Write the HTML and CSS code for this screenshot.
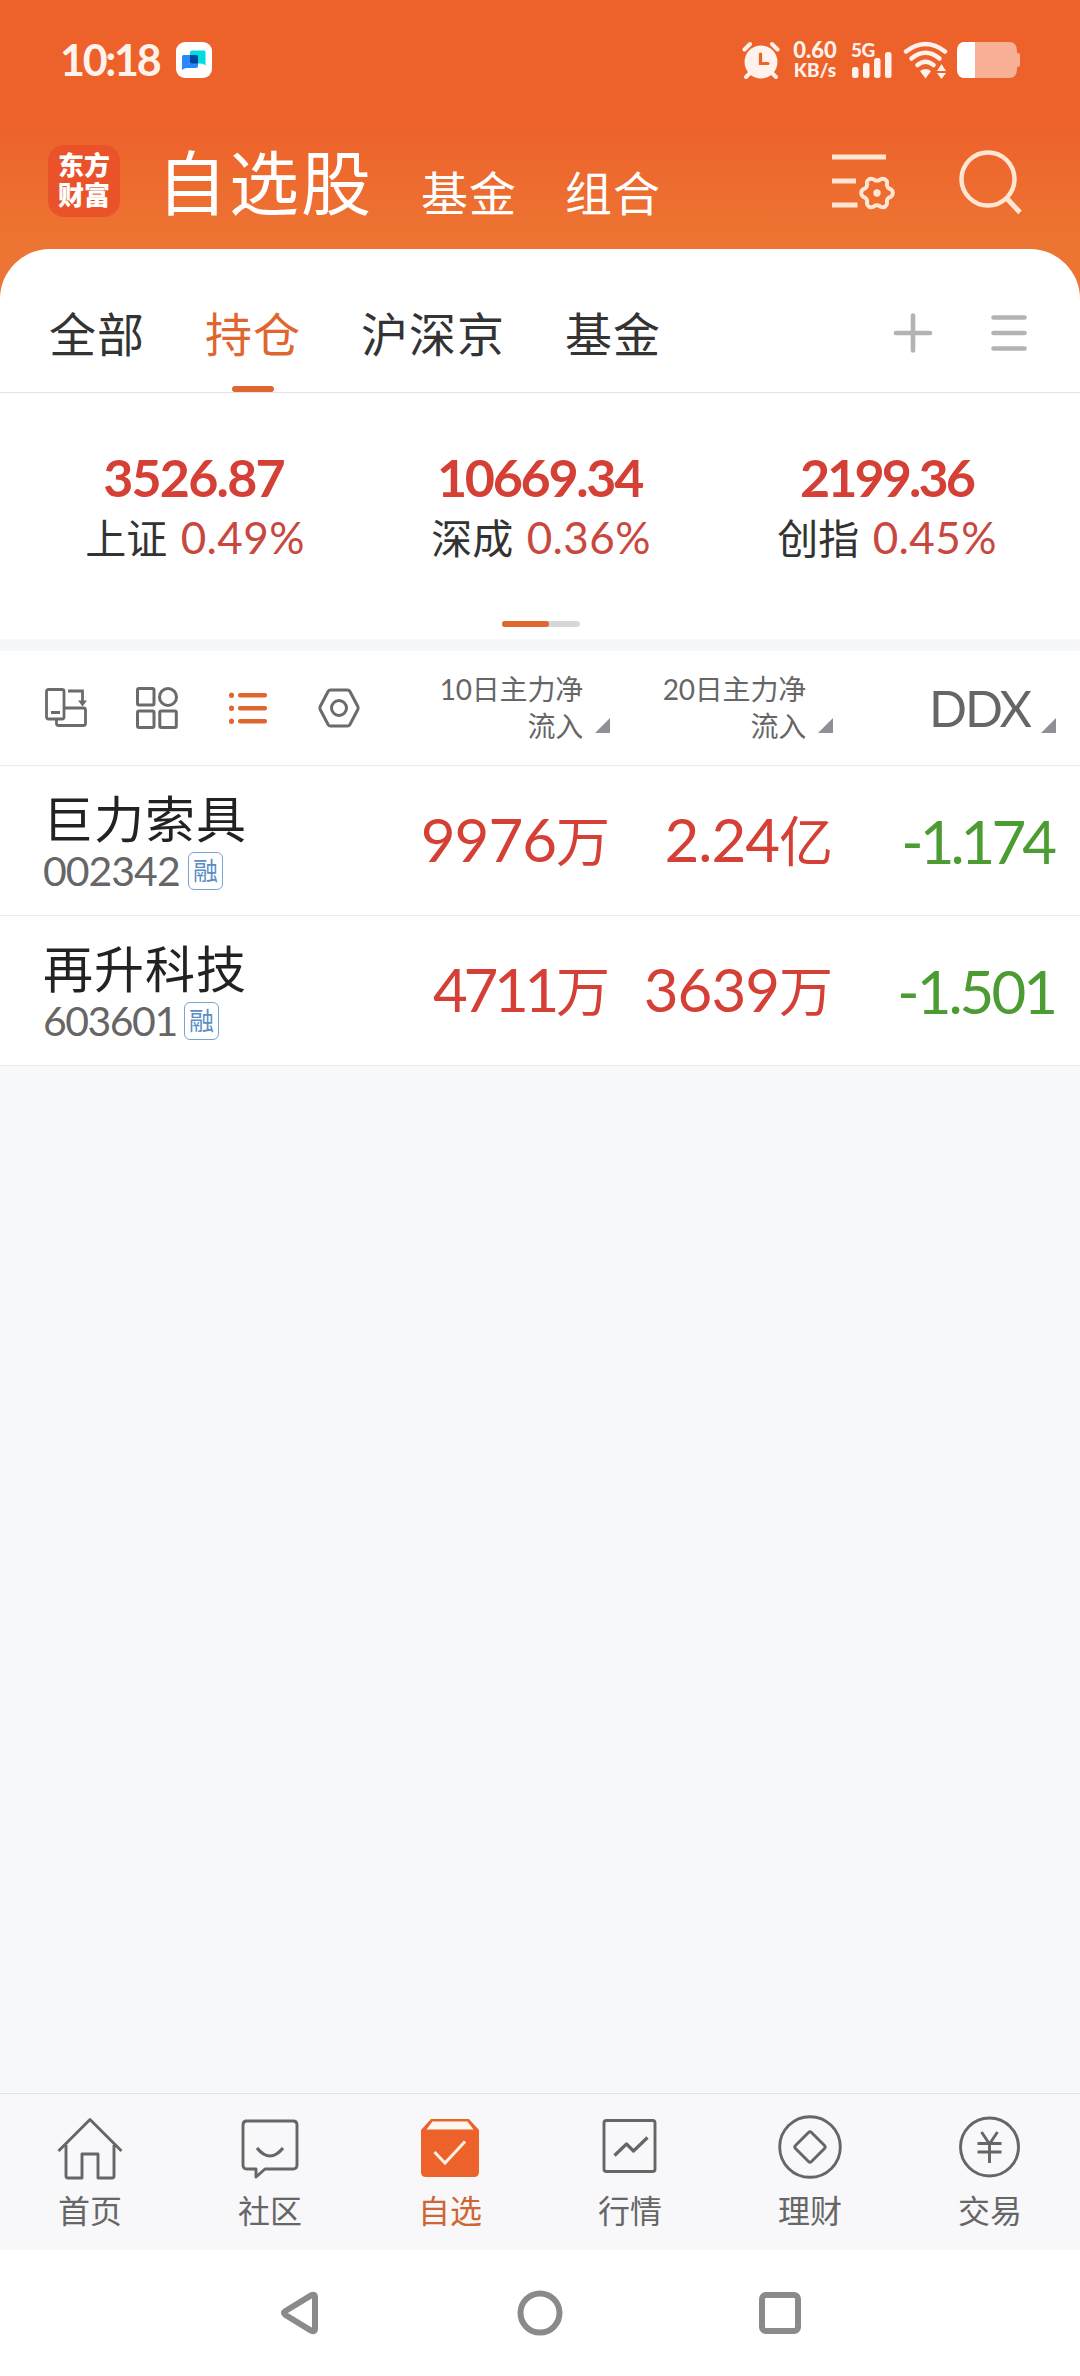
FILE: index.html
```html
<!DOCTYPE html>
<html lang="zh-CN">
<head>
<meta charset="utf-8">
<title>自选股</title>
<link rel="stylesheet" href="styles.css">
</head>
<body>
<div class="app">
  <header class="top">
    <div class="status">
      <span class="clock">10:18</span>
      <svg class="notice" width="36" height="36" viewBox="0 0 36 36"><rect width="36" height="36" rx="9" fill="#fff"/><path d="M16 8.500h12a1.500 1.500 0 0 1 1.500 1.500v13.500q-2-2-5-2H14V10.500a2 2 0 0 1 2-2z" fill="#00dce0"/><path d="M7.500 13H20a2 2 0 0 1 2 2v9a2 2 0 0 1-2 2h-9q-3 0-5 2V14.500A1.500 1.500 0 0 1 7.500 13z" fill="#2a88ff"/><path d="M14 13h6a2 2 0 0 1 2 2v6.500h-6a2 2 0 0 1-2-2z" fill="#00449c"/></svg>
      <div class="status-right">
        <svg class="alarm" width="38" height="38" viewBox="0 0 38 38"><circle cx="19" cy="21" r="16.500" fill="#fff1eb"/><path d="M2.500 8.500 8 3M35.500 8.500 30 3" stroke="#fff1eb" stroke-width="4" stroke-linecap="round"/><path d="M4 36l4-4M34 36l-4-4" stroke="#fff1eb" stroke-width="4" stroke-linecap="round"/><path d="M18.500 13v9.500H26" fill="none" stroke="#ed622b" stroke-width="3.200" stroke-linecap="round"/></svg>
        <div class="speed"><span class="rate">0.60</span><span class="unit">KB/s</span></div>
        <div class="signal"><span class="gen">5G</span>
          <svg width="42" height="26" viewBox="0 0 42 26" fill="#fff1eb"><rect x="1" y="15" width="6.500" height="11" rx="2.500"/><rect x="12" y="11" width="6.500" height="15" rx="2.500"/><rect x="23" y="6" width="6.500" height="20" rx="2.500"/><rect x="34" y="0" width="6.500" height="26" rx="2.500"/></svg>
        </div>
        <svg class="wifi" width="46" height="38" viewBox="0 0 46 38"><g fill="none" stroke="#fff1eb" stroke-width="4.500" stroke-linecap="round"><path d="M3 10.500Q22.500-4.500 42 10.500"/><path d="M8.500 17.500Q22.500 6 36.500 17.500"/><path d="M14.500 24Q22.500 17.500 30.500 24"/></g><path d="M17 30q5.500-4 11 0l-5.500 7.500zM34 30l4.500-7 4.500 7zM34 32h9l-4.500 6z" fill="#fff1eb"/></svg>
        <svg class="battery" width="64" height="36" viewBox="0 0 64 36"><path d="M8 0h44q8 0 8 9v2h1q2 0 2 2v10q0 2-2 2h-1v2q0 9-8 9H8q-8 0-8-9V9Q0 0 8 0z" fill="#f7b095"/><path d="M18 0H8Q0 0 0 9v18q0 9 8 9h10z" fill="#fff"/></svg>
      </div>
    </div>
    <div class="title-bar">
      <div class="logo">东方<br>财富</div>
      <h1 class="title">自选股</h1>
      <span class="section fund">基金</span>
      <span class="section">组合</span>
      <div class="title-actions">
        <svg width="64" height="64" viewBox="0 0 64 64" fill="none" stroke="#ffe6d3" stroke-width="5"><path d="M0 8h54M0 32h24M0 56h25.500"/><path stroke-width="4" stroke-linejoin="round" d="M58.800 40.300A4.400 4.400 0 0 1 58.800 47.700A5 5 0 0 0 55.100 54.100A4.400 4.400 0 0 1 48.700 57.800A5 5 0 0 0 41.300 57.800A4.400 4.400 0 0 1 34.900 54.100A5 5 0 0 0 31.200 47.700A4.400 4.400 0 0 1 31.200 40.300A5 5 0 0 0 34.900 33.900A4.400 4.400 0 0 1 41.300 30.200A5 5 0 0 0 48.700 30.200A4.400 4.400 0 0 1 55.100 33.900A5 5 0 0 0 58.800 40.300z"/><circle cx="45" cy="44" r="3.700" fill="#ffe6d3" stroke="none"/></svg>
        <svg width="64" height="66" viewBox="0 0 64 66" fill="none" stroke="#ffe6d3" stroke-width="4.500"><circle cx="29" cy="30" r="26.500"/><path d="M47.500 49 61 63.500" stroke-width="5"/></svg>
      </div>
    </div>
  </header>

  <main class="sheet">
    <nav class="groups">
      <span class="group">全部</span>
      <span class="group active">持仓</span>
      <span class="group">沪深京</span>
      <span class="group">基金</span>
      <div class="group-actions">
        <svg width="40" height="40" viewBox="0 0 40 40" stroke="#b3b3b3" stroke-width="4.600" stroke-linecap="round"><path d="M20 2.500v35M3 20h34"/></svg>
        <svg width="36" height="40" viewBox="0 0 36 40" stroke="#b3b3b3" stroke-width="4.600" stroke-linecap="round"><path d="M2.500 4.500h31M2.500 20h31M2.500 35.500h31"/></svg>
      </div>
    </nav>
    <section class="indices">
      <div class="index"><div class="point">3526.87</div><div class="change">上证 <b>0.49%</b></div></div>
      <div class="index"><div class="point mid">10669.34</div><div class="change">深成 <b>0.36%</b></div></div>
      <div class="index"><div class="point tight">2199.36</div><div class="change">创指 <b>0.45%</b></div></div>
      <div class="pager"><i></i></div>
    </section>
    <section class="quotes">
      <div class="row head">
        <div class="views">
          <svg width="44" height="44" viewBox="0 0 44 44" fill="none" stroke="#6b6b6b" stroke-width="2.800"><rect x="2.500" y="3.500" width="17.500" height="29.500" rx="2"/><path d="M7 26.500h9M24 5h14.500v11" /><path d="M34 14.500h9l-4.500 6z" fill="#6b6b6b" stroke="none"/><path d="M20 22h19.500a2 2 0 0 1 2 2v13.500a2 2 0 0 1-2 2h-25a2 2 0 0 1-2-2V33"/></svg>
          <svg width="44" height="44" viewBox="0 0 44 44" fill="none" stroke="#6b6b6b" stroke-width="3"><rect x="2.500" y="2.500" width="16.500" height="16.500" rx="1.500"/><circle cx="33" cy="11" r="8.500"/><rect x="2.500" y="25" width="16.500" height="16.500" rx="1.500"/><rect x="24.800" y="25" width="16.500" height="16.500" rx="1.500"/></svg>
          <svg width="44" height="44" viewBox="0 0 44 44" fill="#e0662f"><rect x="3" y="6.500" width="5" height="5.500" rx="2.500"/><rect x="12" y="7" width="29" height="4.600" rx="2"/><rect x="3" y="19.500" width="5" height="5.500" rx="2.500"/><rect x="12" y="20" width="29" height="4.600" rx="2"/><rect x="3" y="32.500" width="5" height="5.500" rx="2.500"/><rect x="12" y="33" width="29" height="4.600" rx="2"/></svg>
          <svg width="44" height="44" viewBox="0 0 44 44" fill="none" stroke="#6b6b6b" stroke-width="3"><path stroke-linejoin="round" d="M13.500 4h17q1.500 0 2.300 1.300l8 15.200q.7 1.500 0 3l-8 15.200Q32 40 30.500 40h-17q-1.500 0-2.300-1.300l-8-15.200q-.7-1.500 0-3l8-15.200Q12 4 13.500 4z"/><circle cx="22" cy="22" r="7.500"/></svg>
        </div>
        <div class="col c1"><span class="label">10日主力净<br>流入</span><i class="sort"></i></div>
        <div class="col c2"><span class="label">20日主力净<br>流入</span><i class="sort"></i></div>
        <div class="col c3"><span class="label ddx">DDX</span><i class="sort"></i></div>
      </div>
      <div class="row stock">
        <div class="who"><div class="name">巨力索具</div><div class="code"><span>002342</span><em class="tag">融</em></div></div>
        <div class="val c1">9976<small>万</small></div>
        <div class="val c2">2.24<small>亿</small></div>
        <div class="val c3 down tight">-1.174</div>
      </div>
      <div class="row stock">
        <div class="who"><div class="name">再升科技</div><div class="code narrow"><span>603601</span><em class="tag">融</em></div></div>
        <div class="val c1 ones">4711<small>万</small></div>
        <div class="val c2">3639<small>万</small></div>
        <div class="val c3 down">-1.501</div>
      </div>
    </section>
  </main>

  <nav class="tabs">
    <a class="tab"><svg width="68" height="68" viewBox="0 0 68 68"><path d="M2.500 37 34 5.500 65.500 37M10 31v31q0 2 2 2h14V40h16v24h14q2 0 2-2V31"/></svg>首页</a>
    <a class="tab"><svg width="68" height="68" viewBox="0 0 68 68"><path d="M9 7h48q4 0 4 4v40q0 4-4 4H29l-9 8v-8H11q-4 0-4-4V11q0-4 4-4" /><path d="M21 34q13 16 26 0" stroke-width="3.200"/></svg>社区</a>
    <a class="tab on"><svg width="68" height="68" viewBox="0 0 68 68"><path class="fill" d="M5 16 15 5h38l10 11v42q0 5-5 5H10q-5 0-5-5z"/><path class="lid" d="M16.500 7.500h35l6 8H10.500z"/><path class="tick" d="M18.500 38 29 49l20-21.500"/></svg>自选</a>
    <a class="tab"><svg width="68" height="68" viewBox="0 0 68 68"><rect x="8" y="6.500" width="51" height="51" rx="2.500"/><path d="M18.500 41.500 30.500 30l7 7 14-13.500" stroke-width="3.200"/></svg>行情</a>
    <a class="tab"><svg width="68" height="68" viewBox="0 0 68 68"><circle cx="34" cy="33" r="30.300"/><path d="m32.500 18.500-13 13q-1.500 1.500 0 3l13 13q1.500 1.500 3 0l13-13q1.500-1.500 0-3l-13-13q-1.500-1.500-3 0z"/></svg>理财</a>
    <a class="tab"><svg width="68" height="68" viewBox="0 0 68 68"><circle cx="33.500" cy="33" r="29"/><path d="m25.500 18 8 12 8-12M21.500 29.500h24M21.500 38h24M33.500 29.500v19.500"/></svg>交易</a>
  </nav>
  <div class="system">
    <svg width="48" height="48" viewBox="0 0 48 48"><path d="M9.500 22 35 6.500q4-2 4 2v31q0 4-4 2L9.500 26q-3-2 0-4z"/></svg>
    <svg width="48" height="48" viewBox="0 0 48 48"><circle cx="24" cy="24" r="19.500"/></svg>
    <svg width="48" height="48" viewBox="0 0 48 48"><rect x="6" y="6" width="36" height="36" rx="4"/></svg>
  </div>
</div>
</body>
</html>
```
FILE: styles.css
```css
* { box-sizing: border-box; }
body {
  margin: 0;
  background: #fff;
  font-family: Lato, "Noto Sans CJK SC", sans-serif;
  color: #333;
}
svg { display: block; flex: none; }
.app {
  width: 1080px;
  height: 2376px;
  display: flex;
  flex-direction: column;
  background: #f7f8fa;
  overflow: hidden;
}

/* Orange header */
.top {
  height: 309px;
  margin-bottom: -60px;
  background: linear-gradient(#ed622b 125px, #ed7533 245px);
  color: #fff;
}
.status {
  height: 120px;
  padding-left: 60px;
  padding-right: 58px;
  display: flex;
  align-items: center;
  color: #fff1eb;
}
.clock { width: 116px; margin-top: -2px; font-size: 43px; font-weight: 700; letter-spacing: -2.3px; }
.status-right { margin-left: auto; display: flex; align-items: center; }
.speed {
  width: 48px;
  margin-left: 11px;
  display: flex;
  flex-direction: column;
  align-items: center;
  font-weight: 900;
}
.rate { font-size: 22px; line-height: 20px; }
.unit { font-size: 19px; line-height: 20px; }
.signal { margin-left: 12px; width: 42px; height: 36px; display: grid; }
.signal > * { grid-area: 1 / 1; }
.signal svg { align-self: end; }
.gen { font-size: 19px; line-height: 15px; font-weight: 900; letter-spacing: -0.5px; }
.wifi { margin-left: 10px; }
.battery { margin-left: 8px; margin-right: 1px; }
.title-bar {
  height: 129px;
  padding: 0 57px 5px 48px;
  display: flex;
  align-items: center;
}
.logo {
  width: 72px;
  height: 72px;
  margin-top: -2px;
  padding: 5px 0;
  border-radius: 16px;
  background: #ea5329;
  font-size: 26px;
  line-height: 30px;
  font-weight: 900;
  text-align: center;
}
.title { margin: 1px 0 0 37px; font-size: 70px; line-height: 90px; font-weight: 400; letter-spacing: 2px; }
.section { margin-top: 21px; margin-left: 48px; font-size: 47px; line-height: 60px; letter-spacing: 1px; }
.section.fund { margin-left: 48px; }
.title-actions { margin-left: auto; margin-top: -1px; display: flex; gap: 63px; }

/* White sheet */
.sheet { position: relative; background: #fff; border-radius: 50px 50px 0 0; }
.groups {
  height: 144px;
  padding: 0 53px 0 49px;
  border-bottom: 1px solid #e4e4e4;
  display: flex;
  align-items: stretch;
  gap: 60px;
}
.group { font-size: 47px; line-height: 170px; letter-spacing: 1px; height: 143px; display: flex; flex-direction: column; align-items: center; }
.active { color: #e0662f; }
.active::after { content: ""; width: 42px; height: 6px; margin-top: -33px; border-radius: 3px; background: #e0662f; }
.group-actions { margin: 24px 0 0 auto; display: flex; align-items: center; gap: 58px; }

.indices {
  height: 246px;
  padding: 54px 20px 0 22px;
  display: grid;
  grid-template-columns: repeat(3, 1fr);
  align-content: start;
  text-align: center;
}
.point { font-size: 52px; line-height: 60px; font-weight: 700; letter-spacing: -1.8px; margin-left: -3px; color: #d43f36; }
.point.mid { letter-spacing: -2.3px; }
.point.tight { letter-spacing: -2.9px; margin-left: -1px; }
.change { font-size: 41px; line-height: 58px; margin-top: 1px; word-spacing: 3px; }
.change b { font-size: 44px; font-weight: 400; letter-spacing: 0.4px; color: #c8483f; }
.pager { grid-column: 1 / -1; justify-self: center; width: 78px; height: 6px; margin-top: 53px; border-radius: 3px; background: #d6d7db; }
.pager i { display: block; width: 47px; height: 6px; border-radius: 3px; background: #e0662f; }

/* Watch list table */
.quotes { border-top: 12px solid #f6f7fa; }
.row { display: grid; grid-template-columns: 386px 224px 223px 223px; border-bottom: 1px solid #ebebeb; padding-right: 24px; }
.head { height: 115px; align-items: center; color: #666; }
.views { display: flex; gap: 47px; padding-left: 44px; }
.col { display: flex; justify-content: flex-end; align-items: flex-end; }
.label { font-size: 28px; line-height: 37px; letter-spacing: -0.2px; text-align: right; }
.ddx { font-size: 50px; line-height: 74px; letter-spacing: -2px; }
.ddx + .sort { margin-left: 11px; }
.sort { width: 15px; height: 15px; margin: 0 0 12px 12px; background: #8f8f95; clip-path: polygon(100% 0, 100% 100%, 0 100%); }
.stock { height: 150px; align-items: center; }
.who { padding-left: 43px; }
.name { font-size: 50px; line-height: 60px; letter-spacing: 1px; color: #222; white-space: nowrap; }
.code { font-size: 41px; line-height: 44px; letter-spacing: -1px; color: #666; display: flex; align-items: center; }
.code span { width: 145px; }
.code.narrow { letter-spacing: -1.5px; }
.code.narrow span { width: 141px; }
.tag {
  width: 35px;
  height: 38px;
  border: 1.500px solid #7ba3d0;
  border-radius: 6px;
  color: #5b8dc6;
  font-size: 25px;
  line-height: 35px;
  font-style: normal;
  text-align: center;
  letter-spacing: 0;
}
.val { font-size: 60px; line-height: 80px; letter-spacing: -1px; text-align: right; color: #d43f36; white-space: nowrap; }
.val small { font-size: 54px; letter-spacing: 0; }
.val.ones { letter-spacing: -4.3px; }
.val.ones small { margin-left: 1px; }
.val.down { color: #4c9c33; letter-spacing: -3px; padding-right: 1px; }
.val.down.tight { letter-spacing: -4px; padding-right: 3px; }

/* Bottom navigation */
.tabs {
  height: 157px;
  margin-top: auto;
  border-top: 1px solid #e2e3e5;
  background: #f8f8fa;
  display: grid;
  grid-template-columns: repeat(6, 1fr);
}
.tab { padding-top: 20px; display: flex; flex-direction: column; align-items: center; font-size: 32px; line-height: 58px; color: #666; }
.tab svg { fill: none; stroke: #666; stroke-width: 2.900; stroke-linejoin: round; }
.tab.on { color: #cf6534; }
.tab .fill { fill: #ed622b; stroke: none; }
.tab .lid { fill: #fdf7f2; stroke: none; }
.tab .tick { stroke: #fff0e4; stroke-width: 3; stroke-linejoin: miter; }
.system { height: 126px; background: #fff; display: flex; justify-content: center; align-items: center; gap: 192px; }
.system svg { fill: none; stroke: #8a8a8a; stroke-width: 6; }
```
